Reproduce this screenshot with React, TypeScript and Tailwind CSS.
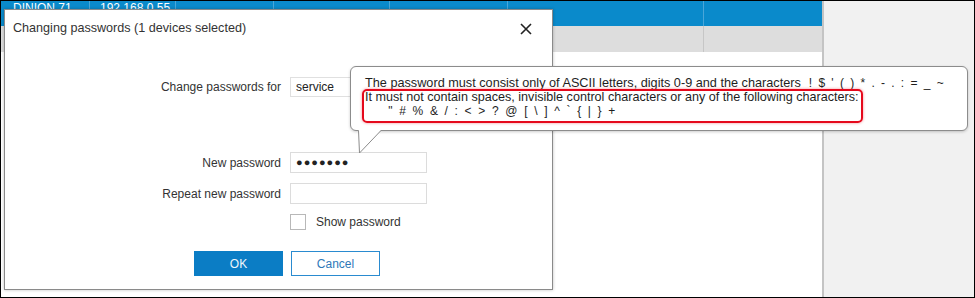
import React from "react";

const headerCols = [
  { w: "w-[89px]", text: "DINION 71", pl: "pl-[12px]" },
  { w: "w-[86px]", text: "192.168.0.55", pl: "pl-[10px]" },
  { w: "w-[98px]", text: "", pl: "" },
  { w: "w-[116px]", text: "", pl: "" },
  { w: "w-[118px]", text: "", pl: "" },
  { w: "w-[196px]", text: "", pl: "" },
];

export default function App() {
  return (
    <div className="relative w-[975px] h-[298px] overflow-hidden border border-black bg-white font-['Liberation_Sans',Arial,sans-serif] text-[12px]">
      {/* background application table */}
      <div className="flex h-full">
        <div className="flex w-[821px] flex-col">
          <div className="flex h-[25px] bg-[#0a8acb]">
            {headerCols.map((c, i) => (
              <div
                key={i}
                className={`${c.w} ${c.pl} h-full border-r border-[#4aa6d9] text-white leading-[14px] whitespace-nowrap overflow-hidden`}
              >
                {c.text}
              </div>
            ))}
            <div className="flex-1" />
          </div>
          <div className="flex h-[26px] bg-[#dddddd]">
            {headerCols.map((c, i) => (
              <div key={i} className={`${c.w} h-full border-r border-[#c6c6c6]`} />
            ))}
            <div className="flex-1" />
          </div>
          <div className="flex-1 bg-white" />
        </div>
        <div className="w-[2px] bg-[#c4c4c4]" />
        <div className="flex-1 bg-[#f1f1f1]" />
      </div>

      {/* dialog window */}
      <div className="absolute left-[3px] top-[8px] flex h-[281px] w-[549px] flex-col border border-[#8a8a8a] bg-white shadow-[0_0_3px_rgba(0,0,0,0.25)]">
        <div className="flex h-[37px] items-center justify-between pl-[8px] pr-[20px]">
          <span className="text-[12.6px] text-[#333]">Changing passwords (1 devices selected)</span>
          <svg width="12" height="12" viewBox="0 0 12 12">
            <path d="M1 1 L11 11 M11 1 L1 11" stroke="#222" strokeWidth="1.6" fill="none" />
          </svg>
        </div>

        <div className="mt-[30px] flex items-center">
          <div className="w-[276px] text-right text-[#333]">Change passwords for</div>
          <div className="ml-[9px] flex h-[20px] w-[137px] items-center border border-[#e0e0e0] pl-[5px] text-[#222]">
            service
          </div>
        </div>

        <div className="mt-[55px] flex items-center">
          <div className="w-[276px] text-right text-[#333]">New password</div>
          <div className="ml-[9px] flex h-[21px] w-[137px] items-center border border-[#dcdcdc] pl-[5px] text-[#222] tracking-[1px] text-[11px]">
            ●●●●●●●
          </div>
        </div>

        <div className="mt-[10px] flex items-center">
          <div className="w-[276px] text-right text-[#333]">Repeat new password</div>
          <div className="ml-[9px] h-[21px] w-[137px] border border-[#dcdcdc]" />
        </div>

        <div className="mt-[9px] flex items-center">
          <div className="w-[276px]" />
          <div className="ml-[9px] h-[16px] w-[16px] border border-[#b8b8b8] bg-white" />
          <span className="ml-[10px] text-[#333]">Show password</span>
        </div>

        <div className="mt-[20px] flex pl-[189px] gap-[8px]">
          <div className="flex h-[25px] w-[89px] items-center justify-center bg-[#0b7dc5] text-[#f0f6fb]">
            OK
          </div>
          <div className="flex h-[25px] w-[89px] items-center justify-center border border-[#2a8bd0] bg-white text-[#2e78b8]">
            Cancel
          </div>
        </div>
      </div>

      {/* tooltip */}
      <div className="absolute left-[349px] top-[65px] h-[65px] w-[618px] rounded-[6px] border border-[#8c8c8c] bg-white pl-[14px] pt-[9px] text-[12px] leading-[14px] text-[#1e1e1e] shadow-[0_1px_3px_rgba(0,0,0,0.2)]">
        <div className="flex whitespace-pre">
          <span className="text-[12.7px]">The password must consist only of ASCII letters, digits 0-9 and the characters</span>
          <span className="ml-[8px] [word-spacing:-0.2px]">{"!  $  '  (  )  *  .  -  .  :  =  _  ~"}</span>
        </div>
        <div className="whitespace-pre text-[12.6px]">It must not contain spaces, invisible control characters or any of the following characters:</div>
        <div className="whitespace-pre">{"       \"  #  %  &  /  :  <  >  ?  @  [  \\  ]  ^  `  {  |  }  +"}</div>
        <div className="absolute left-[11px] top-[22px] h-[34px] w-[501px] rounded-[5px] border-2 border-[#e5091c] shadow-[0_0_3px_rgba(230,0,20,0.45)]" />
      </div>
      <svg className="absolute left-[356px] top-[128px]" width="26" height="26" viewBox="0 0 26 26">
        <polygon points="1.5,0 2.5,24 25,0" fill="#ffffff" />
        <path d="M1.5 1.5 L2.5 24 L24 1.5" stroke="#8c8c8c" strokeWidth="1" fill="none" />
      </svg>
    </div>
  );
}
